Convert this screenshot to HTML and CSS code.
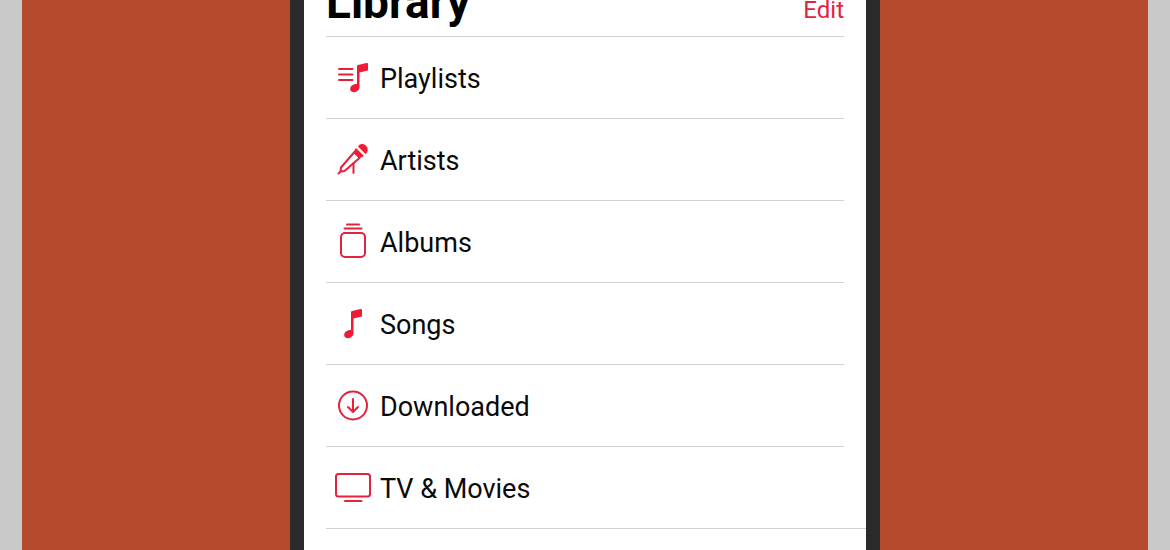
FILE: index.html
```html
<!DOCTYPE html>
<html lang="en">
<head>
<meta charset="utf-8">
<title>Library</title>
<link rel="stylesheet" href="styles.css">
</head>
<body>
<div class="backdrop">
  <main class="phone">
    <header class="header">
      <h1 class="title">Library</h1>
      <button class="edit" type="button">Edit</button>
    </header>
    <nav>
      <ul class="list">
        <li class="item"><a class="link" href="#playlists">
          <svg class="icon" viewBox="0 0 40 40" aria-hidden="true">
            <path class="line" d="M7 12H20.500M7 17.500H20.500M7 23H20.500"/>
            <path class="fill" d="M25 9Q25 8.300 26 8L34.500 6Q36 5.700 36 7V13.500L27.500 15.500V30C27.500 33.500 24 35.500 21.500 35.200C19 35 18 33.500 18.200 31.500C18.500 28.500 21.500 27 25 27Z"/>
          </svg>Playlists</a></li>
        <li class="item"><a class="link" href="#artists">
          <svg class="icon" viewBox="0 0 40 40" aria-hidden="true">
            <path class="fill" d="M26 7.500C28 4.500 31.500 4.300 34 6.800C36.500 9.300 36.300 13 33.500 15Z"/>
            <path class="fill" d="M24 9L32 17L27 19.500L21 13.500Z"/>
            <path class="line" d="M22 13.500L9 28.500L8.500 31L10 32.500L12.500 32L27.500 19M8.500 32.500L6.500 34.500"/>
            <path class="line" d="M21.500 24V34"/>
          </svg>Artists</a></li>
        <li class="item"><a class="link" href="#albums">
          <svg class="icon" viewBox="0 0 40 40" aria-hidden="true">
            <path class="line" d="M15 3.500H27M12.500 7.500H29.500"/>
            <rect class="line" x="9" y="12" width="24" height="24" rx="4"/>
          </svg>Albums</a></li>
        <li class="item"><a class="link" href="#songs">
          <svg class="icon" viewBox="0 0 40 40" aria-hidden="true">
            <path class="fill" d="M19 9Q19 8.300 20 8L28.500 6Q30 5.700 30 7V13.500L21.500 15.500V30C21.500 33.500 18 35.500 15.500 35.200C13 35 12 33.500 12.200 31.500C12.500 28.500 15.500 27 19 27Z"/>
          </svg>Songs</a></li>
        <li class="item"><a class="link" href="#downloaded">
          <svg class="icon" viewBox="0 0 40 40" aria-hidden="true">
            <circle class="line" cx="21" cy="20.500" r="14"/>
            <path class="line" d="M21 14V27M16 22L21 27L26 22"/>
          </svg>Downloaded</a></li>
        <li class="item item-last"><a class="link" href="#tv-movies">
          <svg class="icon" viewBox="0 0 40 40" aria-hidden="true">
            <rect class="line" x="4" y="7" width="34" height="22.500" rx="2.500"/>
            <path class="line" d="M13 34H29.500"/>
          </svg>TV &amp; Movies</a></li>
      </ul>
    </nav>
  </main>
</div>
</body>
</html>
```
FILE: styles.css
```css
* {
  box-sizing: border-box;
}

body {
  margin: 0;
  padding: 0 22px;
  background: #c9c9c9;
  font-family: Roboto, "Liberation Sans", sans-serif;
  color: #0a0a0a;
}

.backdrop {
  display: flex;
  justify-content: center;
  min-height: 100vh;
  background: #b54a2d;
}

.phone {
  width: 100%;
  max-width: 590px;
  padding-left: 22px;
  border: solid #2b2b2b;
  border-width: 0 14px;
  background: #fff;
}

.header {
  display: flex;
  justify-content: space-between;
  align-items: flex-end;
  height: 37px;
  margin-right: 22px;
  border-bottom: 1px solid #d2d2d2;
}

.title {
  margin: 0;
  padding-bottom: 10px;
  font-size: 46px;
  font-weight: 700;
  line-height: 48px;
  color: #000;
}

.edit {
  padding: 0 0 16px;
  border: 0;
  background: none;
  font: inherit;
  font-size: 24px;
  line-height: 20px;
  color: #e3223d;
}

.list {
  margin: 0;
  padding: 0;
  list-style: none;
}

.item {
  margin-right: 22px;
  border-bottom: 1px solid #d2d2d2;
}

.item-last {
  margin-right: 0;
}

.link {
  display: flex;
  align-items: center;
  gap: 8px;
  height: 81px;
  padding-left: 6px;
  padding-top: 2px;
  font-size: 27px;
  line-height: 32px;
  color: inherit;
  text-decoration: none;
}

.icon {
  flex: none;
  width: 40px;
  height: 40px;
  margin-bottom: 4px;
}

.line {
  fill: none;
  stroke: #e3223d;
  stroke-width: 2;
  stroke-linecap: round;
  stroke-linejoin: round;
}

.fill {
  fill: #ee1c36;
}
```
